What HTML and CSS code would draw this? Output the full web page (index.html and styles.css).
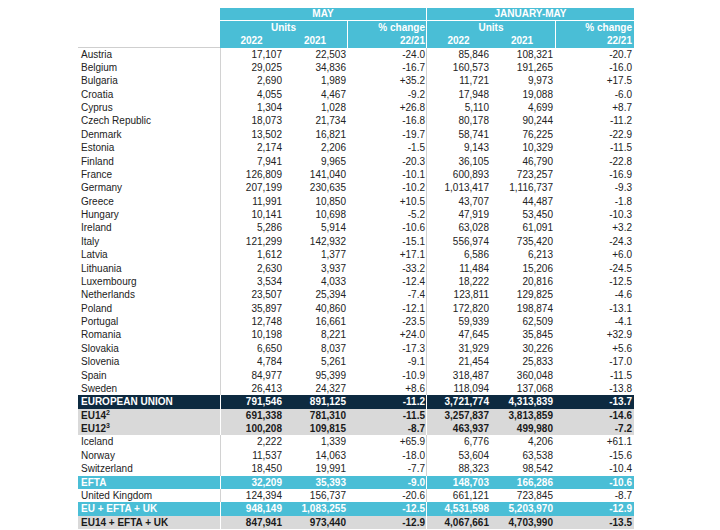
FILE: index.html
```html
<!DOCTYPE html>
<html>
<head>
<meta charset="utf-8">
<link rel="stylesheet" href="styles.css">
</head>
<body>
<div class="sheet">
  <div class="head">
    <div class="h-label"></div>
    <div class="h-group may">
      <div class="h-title">MAY</div>
      <div class="h-sub">
        <div class="h-units"><div class="hl">Units</div><div class="years"><span>2022</span><span>2021</span></div></div>
        <div class="h-pct"><div class="hl">% change</div><div class="hl">22/21</div></div>
      </div>
    </div>
    <div class="h-group jan">
      <div class="h-title">JANUARY-MAY</div>
      <div class="h-sub">
        <div class="h-units"><div class="hl">Units</div><div class="years"><span>2022</span><span>2021</span></div></div>
        <div class="h-pct"><div class="hl">% change</div><div class="hl">22/21</div></div>
      </div>
    </div>
  </div>
  <div id="rows"></div>
</div>
<script src="app.js"></script>
</body>
</html>
```
FILE: styles.css
```css
* { box-sizing: border-box; }
html, body { margin: 0; padding: 0; background: #fff; }
body { font-family: "Liberation Sans", Arial, sans-serif; font-size: 10px; color: #222; }
.sheet { padding: 8px 0 0 78px; width: 634px; }
.head { display: grid; grid-template-columns: 142px 206px 208px; height: 39.5px; }
.h-label { border-bottom: 1px solid #cfcfcf; }
.h-group { background: #4abed6; color: #fff; font-weight: bold; display: flex; flex-direction: column; }
.h-group.jan { border-left: 1px solid #fff; }
.h-title { height: 13px; line-height: 12px; text-align: center; border-bottom: 1px solid #fff; }
.h-sub { display: grid; grid-template-columns: 127px 79px; flex: 1; }
.jan .h-sub { grid-template-columns: 128px 79px; }
.h-units { display: flex; flex-direction: column; text-align: center; }
.hl { height: 13.25px; line-height: 13.25px; }
.years { display: grid; grid-template-columns: 63px 64px; height: 13.25px; line-height: 13.25px; }
.h-pct { border-left: 1px solid #fff; text-align: right; padding-right: 1px; }
.jan .h-pct { padding-right: 2px; }
.row { display: grid; grid-template-columns: 142px 63px 64px 79px 65px 64px 79px; height: 13.38px; line-height: 13.38px; }
.c { white-space: nowrap; text-align: right; padding-right: 1px; }
.c.lab { text-align: left; padding-left: 3px; }
.c.m1, .c.j1 { border-left: 1px solid #d2d2d2; }
.c.j1, .c.j2, .c.j3 { padding-right: 2px; }
.row.eu { background: #0d2a40; color: #fff; font-weight: bold; }
.row.grey { background: #d9d9d9; font-weight: bold; color: #1a1a1a; }
.row.teal { background: #4abed6; color: #fff; font-weight: bold; }
.row.eu .m1, .row.eu .j1, .row.grey .m1, .row.grey .j1, .row.teal .m1, .row.teal .j1 { border-left-color: #fff; }
sup { font-size: 7px; line-height: 0; vertical-align: 4px; }
```
FILE: app.js
```js
const data = [
["Austria","17,107","22,503","-24.0","85,846","108,321","-20.7"],
["Belgium","29,025","34,836","-16.7","160,573","191,265","-16.0"],
["Bulgaria","2,690","1,989","+35.2","11,721","9,973","+17.5"],
["Croatia","4,055","4,467","-9.2","17,948","19,088","-6.0"],
["Cyprus","1,304","1,028","+26.8","5,110","4,699","+8.7"],
["Czech Republic","18,073","21,734","-16.8","80,178","90,244","-11.2"],
["Denmark","13,502","16,821","-19.7","58,741","76,225","-22.9"],
["Estonia","2,174","2,206","-1.5","9,143","10,329","-11.5"],
["Finland","7,941","9,965","-20.3","36,105","46,790","-22.8"],
["France","126,809","141,040","-10.1","600,893","723,257","-16.9"],
["Germany","207,199","230,635","-10.2","1,013,417","1,116,737","-9.3"],
["Greece","11,991","10,850","+10.5","43,707","44,487","-1.8"],
["Hungary","10,141","10,698","-5.2","47,919","53,450","-10.3"],
["Ireland","5,286","5,914","-10.6","63,028","61,091","+3.2"],
["Italy","121,299","142,932","-15.1","556,974","735,420","-24.3"],
["Latvia","1,612","1,377","+17.1","6,586","6,213","+6.0"],
["Lithuania","2,630","3,937","-33.2","11,484","15,206","-24.5"],
["Luxembourg","3,534","4,033","-12.4","18,222","20,816","-12.5"],
["Netherlands","23,507","25,394","-7.4","123,811","129,825","-4.6"],
["Poland","35,897","40,860","-12.1","172,820","198,874","-13.1"],
["Portugal","12,748","16,661","-23.5","59,939","62,509","-4.1"],
["Romania","10,198","8,221","+24.0","47,645","35,845","+32.9"],
["Slovakia","6,650","8,037","-17.3","31,929","30,226","+5.6"],
["Slovenia","4,784","5,261","-9.1","21,454","25,833","-17.0"],
["Spain","84,977","95,399","-10.9","318,487","360,048","-11.5"],
["Sweden","26,413","24,327","+8.6","118,094","137,068","-13.8"],
["EUROPEAN UNION","791,546","891,125","-11.2","3,721,774","4,313,839","-13.7","eu"],
["EU14|2","691,338","781,310","-11.5","3,257,837","3,813,859","-14.6","grey"],
["EU12|3","100,208","109,815","-8.7","463,937","499,980","-7.2","grey"],
["Iceland","2,222","1,339","+65.9","6,776","4,206","+61.1"],
["Norway","11,537","14,063","-18.0","53,604","63,538","-15.6"],
["Switzerland","18,450","19,991","-7.7","88,323","98,542","-10.4"],
["EFTA","32,209","35,393","-9.0","148,703","166,286","-10.6","teal"],
["United Kingdom","124,394","156,737","-20.6","661,121","723,845","-8.7"],
["EU + EFTA + UK","948,149","1,083,255","-12.5","4,531,598","5,203,970","-12.9","teal"],
["EU14 + EFTA + UK","847,941","973,440","-12.9","4,067,661","4,703,990","-13.5","grey"]
];
const cls = ["lab","m1","m2","m3","j1","j2","j3"];
const root = document.getElementById("rows");
for (const r of data) {
  const row = document.createElement("div");
  row.className = "row" + (r[7] ? " " + r[7] : "");
  for (let i = 0; i < 7; i++) {
    const c = document.createElement("div");
    c.className = "c " + cls[i];
    if (i === 0 && r[0].includes("|")) {
      const [t, s] = r[0].split("|");
      c.textContent = t;
      const sup = document.createElement("sup");
      sup.textContent = s;
      c.appendChild(sup);
    } else {
      c.textContent = r[i];
    }
    row.appendChild(c);
  }
  root.appendChild(row);
}
```
